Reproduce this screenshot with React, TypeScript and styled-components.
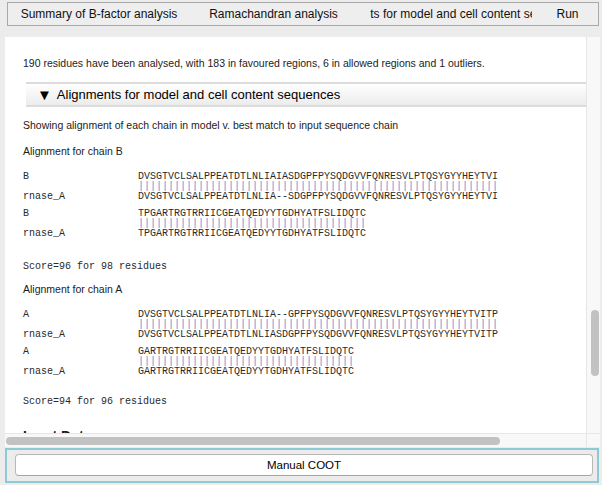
import React from "react";
import styled, { createGlobalStyle } from "styled-components";

const GlobalStyle = createGlobalStyle`
  html, body { margin: 0; padding: 0; }
  body {
    background: #ececec;
    font-family: "Liberation Sans", Arial, sans-serif;
    width: 602px;
    height: 485px;
    overflow: hidden;
  }
`;

const Page = styled.div`
  width: 602px;
  height: 485px;
  display: flex;
  flex-direction: column;
  box-sizing: border-box;
  padding: 2px 0 0 0;
`;

const TabBar = styled.div`
  margin: 0 3px 0 7px;
  height: 24px;
  box-sizing: border-box;
  border: 1px solid #a9a9a9;
  background: #eeeeee;
  display: flex;
  align-items: center;
  overflow: hidden;
`;

const Tab = styled.div<{ $w: number; $pad?: number }>`
  flex: 0 0 ${(p) => p.$w}px;
  min-width: 0;
  overflow: hidden;
  box-sizing: border-box;
  padding: 0 ${(p) => p.$pad ?? 0}px;
`;

const TabClip = styled.div`
  overflow: hidden;
  white-space: nowrap;
  font-size: 12px;
  line-height: 16px;
  color: #111;
`;

const TabText = styled.span`
  display: inline-block;
  margin-left: 50%;
  transform: translateX(-50%);
`;

const Frame = styled.div`
  margin: 11px 2px 0 5px;
  height: 410px;
  display: grid;
  grid-template-columns: 1fr 14px;
  grid-template-rows: 1fr 14px;
`;

const Viewport = styled.div`
  background: #ffffff;
  overflow: hidden;
  min-width: 0;
`;

const Content = styled.div`
  width: 690px;
  padding: 20px 0 0 0;
  color: #1c1c1c;
`;

const Para = styled.p<{ $mt?: number }>`
  margin: ${(p) => p.$mt ?? 0}px 0 0 18px;
  font-size: 10.5px;
  line-height: 13px;
`;

const Section = styled.div`
  margin: 12px 0 0 21px;
  height: 25px;
  box-sizing: border-box;
  border-top: 2px solid #dcdcdc;
  border-bottom: 2px solid #dcdcdc;
  background: linear-gradient(#ffffff, #ececec);
  display: flex;
  align-items: center;
  padding-left: 11px;
  font-size: 13px;
  color: #000;
  white-space: nowrap;
`;

const Arrow = styled.span`
  font-size: 15px;
  margin-right: 5px;
  line-height: 1;
`;

const Align = styled.div<{ $mt: number }>`
  margin: ${(p) => p.$mt}px 0 0 18px;
  font-family: "Liberation Mono", "Courier New", monospace;
  font-size: 10px;
  line-height: 10px;
  color: #2a2a2a;
  white-space: pre;
`;

const Block = styled.div<{ $mt?: number }>`
  display: grid;
  grid-template-columns: 115px auto;
  margin-top: ${(p) => p.$mt ?? 0}px;
`;

const Bars = styled.span`
  color: #4f98d8;
`;

const Score = styled.div<{ $mt: number }>`
  margin: ${(p) => p.$mt}px 0 0 18px;
  font-family: "Liberation Mono", "Courier New", monospace;
  font-size: 10px;
  line-height: 12px;
  color: #2a2a2a;
  white-space: pre;
`;

const Heading = styled.h3`
  margin: 20px 0 0 18px;
  font-size: 14px;
  font-weight: bold;
  line-height: 16px;
`;

const VTrack = styled.div`
  background: #f8f8f8;
  border-left: 1px solid #e6e6e6;
  display: flex;
  flex-direction: column;
  align-items: center;
`;

const VThumb = styled.div`
  margin-top: 273px;
  width: 8px;
  height: 66px;
  border-radius: 4px;
  background: #c2c2c2;
  margin-left: 2px;
`;

const HTrack = styled.div`
  background: #f8f8f8;
  border-top: 1px solid #e6e6e6;
  display: flex;
  align-items: center;
`;

const HThumb = styled.div`
  margin-left: 1px;
  width: 494px;
  height: 8px;
  border-radius: 4px;
  background: #c2c2c2;
`;

const Corner = styled.div`
  background: #f8f8f8;
  border-top: 1px solid #e6e6e6;
  border-left: 1px solid #e6e6e6;
`;

const Footer = styled.div`
  margin: 1px 3px 0 5px;
  height: 35px;
  box-sizing: border-box;
  border: 2px solid #8dcad5;
  padding: 4px 4px 0 8px;
`;

const Button = styled.button`
  display: block;
  width: 100%;
  height: 22px;
  box-sizing: border-box;
  background: #ffffff;
  border: 1px solid #b8b8b8;
  border-bottom-color: #a5a5a5;
  border-radius: 4px;
  font-family: "Liberation Sans", Arial, sans-serif;
  font-size: 11.5px;
  color: #000;
  padding: 0;
`;

type Row = [string, string, string, string];

const chainB: Row[] = [
  [
    "B",
    "DVSGTVCLSALPPEATDTLNLIAIASDGPFPYSQDGVVFQNRESVLPTQSYGYYHEYTVI",
    "rnase_A",
    "DVSGTVCLSALPPEATDTLNLIA--SDGPFPYSQDGVVFQNRESVLPTQSYGYYHEYTVI",
  ],
  ["B", "TPGARTRGTRRIICGEATQEDYYTGDHYATFSLIDQTC", "rnase_A", "TPGARTRGTRRIICGEATQEDYYTGDHYATFSLIDQTC"],
];

const chainA: Row[] = [
  [
    "A",
    "DVSGTVCLSALPPEATDTLNLIA--GPFPYSQDGVVFQNRESVLPTQSYGYYHEYTVITP",
    "rnase_A",
    "DVSGTVCLSALPPEATDTLNLIASDGPFPYSQDGVVFQNRESVLPTQSYGYYHEYTVITP",
  ],
  ["A", "GARTRGTRRIICGEATQEDYYTGDHYATFSLIDQTC", "rnase_A", "GARTRGTRRIICGEATQEDYYTGDHYATFSLIDQTC"],
];

function Alignment({ rows, mt }: { rows: Row[]; mt: number }) {
  return (
    <Align $mt={mt}>
      {rows.map((r, i) => (
        <Block key={i} $mt={i === 0 ? 0 : 7}>
          <span>{r[0]}</span>
          <span>{r[1]}</span>
          <span />
          <Bars>{"|".repeat(r[1].length)}</Bars>
          <span>{r[2]}</span>
          <span>{r[3]}</span>
        </Block>
      ))}
    </Align>
  );
}

const tabs: { label: string; w: number; pad?: number }[] = [
  { label: "Summary of B-factor analysis", w: 182 },
  { label: "Ramachandran analysis", w: 167 },
  { label: "Alignments for model and cell content sequences", w: 188, pad: 13 },
  { label: "Run", w: 45 },
];

export default function App() {
  return (
    <>
      <GlobalStyle />
      <Page>
        <TabBar>
          {tabs.map((t) => (
            <Tab key={t.label} $w={t.w} $pad={t.pad}>
              <TabClip>
                <TabText>{t.label}</TabText>
              </TabClip>
            </Tab>
          ))}
        </TabBar>
        <Frame>
          <Viewport>
            <Content>
              <Para>
                190 residues have been analysed, with 183 in favoured regions, 6 in allowed regions and 1 outliers.
              </Para>
              <Section>
                <Arrow>▼</Arrow>Alignments for model and cell content sequences
              </Section>
              <Para $mt={12}>Showing alignment of each chain in model v. best match to input sequence chain</Para>
              <Para $mt={13}>Alignment for chain B</Para>
              <Alignment rows={chainB} mt={14} />
              <Score $mt={22}>Score=96 for 98 residues</Score>
              <Para $mt={10}>Alignment for chain A</Para>
              <Alignment rows={chainA} mt={14} />
              <Score $mt={19}>Score=94 for 96 residues</Score>
              <Heading>Input Data</Heading>
            </Content>
          </Viewport>
          <VTrack>
            <VThumb />
          </VTrack>
          <HTrack>
            <HThumb />
          </HTrack>
          <Corner />
        </Frame>
        <Footer>
          <Button>Manual COOT</Button>
        </Footer>
      </Page>
    </>
  );
}
